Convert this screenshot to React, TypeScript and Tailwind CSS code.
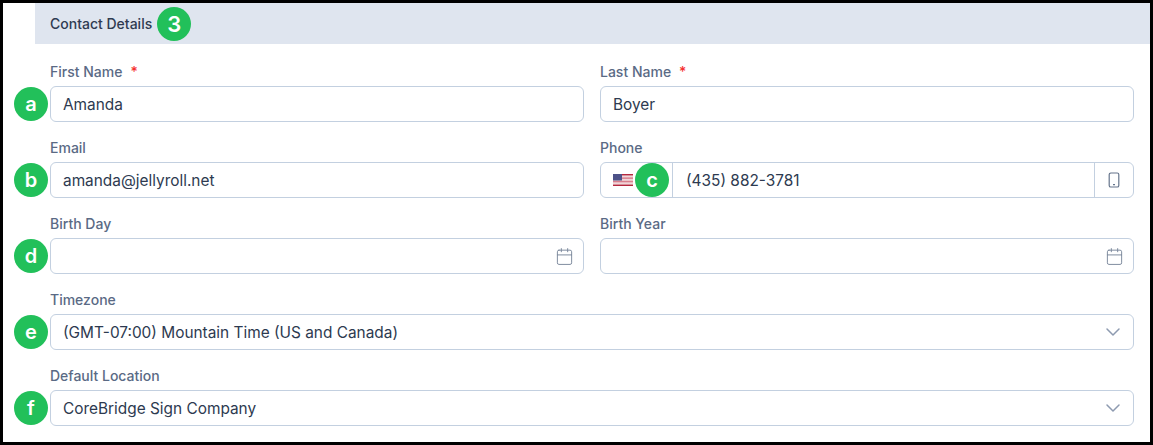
import { Calendar, ChevronDown } from "lucide-react";
import type { ReactNode } from "react";

function Badge({ children, className = "" }: { children: ReactNode; className?: string }) {
  return (
    <span className={`flex h-[34px] w-[34px] items-center justify-center rounded-full bg-[#22c05a] text-[20px] font-semibold leading-none text-white ${className}`}>
      {children}
    </span>
  );
}

function Field({ label, required, badge, children }: { label: string; required?: boolean; badge?: string; children: ReactNode }) {
  return (
    <div>
      <div className="mb-[4px] h-[20px] text-[14px] font-medium leading-[20px] text-[#5a6a85]">
        {label}
        {required ? <span className="ml-[8px] text-[#f53030]">*</span> : null}
      </div>
      <div className="relative">
        {badge ? <Badge className="absolute left-[-36px] top-[1px]">{badge}</Badge> : null}
        {children}
      </div>
    </div>
  );
}

function Box({ text, children }: { text?: string; children?: ReactNode }) {
  return (
    <div className="flex h-[36px] items-center justify-between rounded-[6px] border border-[#c3d0e0] bg-white pl-[12px] pr-[9px] text-[15.4px] text-[#2d3a50]">
      <span className="pt-[2px]">{text}</span>
      {children}
    </div>
  );
}

function FlagIcon() {
  return (
    <svg width="20" height="12" viewBox="0 0 20 12">
      <rect width="20" height="12" fill="#f0d5d8" />
      <rect y="0" width="20" height="1.4" fill="#b5283f" />
      <rect y="3.4" width="20" height="1.5" fill="#d9808e" />
      <rect y="6.8" width="20" height="1.5" fill="#d9808e" />
      <rect y="10.6" width="20" height="1.4" fill="#b5283f" />
      <rect width="9" height="6.5" fill="#4d5288" />
    </svg>
  );
}

function PhoneIcon() {
  return (
    <svg width="16" height="16" viewBox="0 0 16 16" fill="none" stroke="#66758c" strokeWidth="1.2">
      <rect x="3.2" y="1" width="9.6" height="14" rx="1.6" />
      <path d="M7 12.6h2" />
    </svg>
  );
}

export default function App() {
  return (
    <div className="h-[445px] w-[1153px] overflow-hidden border-[3px] border-black bg-white font-['Inter',sans-serif]">
      <div className="ml-[32px] flex h-[41px] items-center gap-[5px] bg-[#dfe5ef] pl-[15px] text-[14px] font-medium text-[#2f3b52]">
        Contact Details
        <Badge className="text-[22px]">3</Badge>
      </div>
      <div className="grid grid-cols-2 gap-x-[16px] gap-y-[16px] pl-[47px] pr-[16px] pt-[18px]">
        <Field label="First Name" required badge="a">
          <Box text="Amanda" />
        </Field>
        <Field label="Last Name" required>
          <Box text="Boyer" />
        </Field>
        <Field label="Email" badge="b">
          <Box text="amanda@jellyroll.net" />
        </Field>
        <Field label="Phone">
          <div className="flex h-[36px] items-center rounded-[6px] border border-[#c3d0e0] bg-white text-[15.4px] text-[#2d3a50]">
            <div className="relative flex h-full w-[72px] items-center border-r border-[#c3d0e0] pl-[12px]">
              <FlagIcon />
              <Badge className="absolute left-[34px] top-0">c</Badge>
            </div>
            <div className="flex-1 pl-[13px] pt-[2px]">(435) 882-3781</div>
            <div className="flex h-full w-[39px] items-center justify-center border-l border-[#c3d0e0]">
              <PhoneIcon />
            </div>
          </div>
        </Field>
        <Field label="Birth Day" badge="d">
          <Box>
            <Calendar className="h-[19px] w-[19px] text-[#7a879b]" strokeWidth={1.2} />
          </Box>
        </Field>
        <Field label="Birth Year">
          <Box>
            <Calendar className="h-[19px] w-[19px] text-[#7a879b]" strokeWidth={1.2} />
          </Box>
        </Field>
        <div className="col-span-2">
          <Field label="Timezone" badge="e">
            <Box text="(GMT-07:00) Mountain Time (US and Canada)">
              <ChevronDown className="-mr-[1px] h-[24px] w-[24px] text-[#8d9ab0]" strokeWidth={1.5} />
            </Box>
          </Field>
        </div>
        <div className="col-span-2">
          <Field label="Default Location" badge="f">
            <Box text="CoreBridge Sign Company">
              <ChevronDown className="-mr-[1px] h-[24px] w-[24px] text-[#8d9ab0]" strokeWidth={1.5} />
            </Box>
          </Field>
        </div>
      </div>
    </div>
  );
}
